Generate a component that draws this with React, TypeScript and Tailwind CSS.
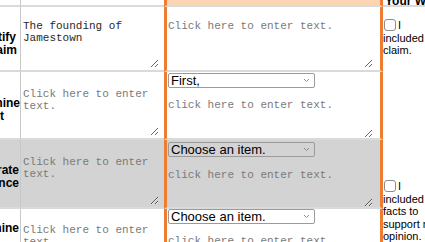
const sans = "font-['Liberation_Sans',Arial,sans-serif]";
const mono = "font-['Liberation_Mono','Courier_New',monospace]";

const line = "border-b-2 border-b-[#dadada]";
const orange = "border-x-[3px] border-x-[#ef7d31]";

function Select({ label }: { label: string }) {
  return (
    <div
      className={`ml-[1px] flex h-[15px] w-[147px] items-center justify-between rounded-[2px] border border-[#9a9a9a] pl-[2px] pr-[4px] text-[13px] leading-none text-black ${sans}`}
    >
      <span>{label}</span>
      <svg width="7" height="5" viewBox="0 0 7 5" fill="none">
        <path d="M1 1l2.5 2.5L6 1" stroke="#8a8a8a" strokeWidth="1" />
      </svg>
    </div>
  );
}

function Area({ text, dark, className }: { text: string; dark?: boolean; className: string }) {
  return (
    <textarea
      readOnly
      defaultValue={text}
      className={`block bg-transparent px-[1px] text-[11px] leading-[12px] outline-none ${mono} ${
        dark ? "text-[#2a2a2a]" : "text-[#7a7a7a]"
      } ${className}`}
    />
  );
}

function Label({ lines }: { lines: { t: string; mr: string }[] }) {
  return (
    <>
      {lines.map((l) => (
        <div key={l.t} className={`whitespace-nowrap ${l.mr}`}>
          {l.t}
        </div>
      ))}
    </>
  );
}

function Check({ lines }: { lines: string[] }) {
  return (
    <>
      <div className="flex items-center">
        <span className="ml-[1px] inline-block h-[12px] w-[12px] rounded-[3px] border border-[#8c8c8c] bg-white" />
        <span className="ml-[2px]">I</span>
      </div>
      {lines.map((l) => (
        <div key={l} className="whitespace-nowrap">
          {l}
        </div>
      ))}
    </>
  );
}

export default function App() {
  const col1 = `flex flex-col items-end overflow-hidden border-r border-r-[#c8c8c8] text-[12px] font-bold leading-[13px] text-black ${sans} ${line}`;
  return (
    <div className="h-[242px] w-[425px] overflow-hidden bg-white">
      <div className="grid grid-cols-[21px_143px_219px_300px] grid-rows-[7px_65px_68px_69px_80px]">
        {/* header */}
        <div className={`border-r border-r-[#c8c8c8] ${line}`} />
        <div className={line} />
        <div className={`bg-[#fbd4b4] ${orange} ${line}`} />
        <div className={`overflow-hidden ${line}`}>
          <div className={`ml-[2px] mt-[-5px] text-[12px] font-bold leading-[12px] text-black ${sans}`}>
            Your Writing
          </div>
        </div>

        {/* row 1 */}
        <div className={`${col1} pt-[24px]`}>
          <Label lines={[{ t: "Identify", mr: "mr-[4px]" }, { t: "Claim", mr: "mr-[3px]" }]} />
        </div>
        <div className={`py-[2px] ${line}`}>
          <Area text={"The founding of Jamestown"} dark className="ml-[1px] h-[59px] w-[137px] pt-[11px]" />
        </div>
        <div className={`py-[2px] ${orange} ${line}`}>
          <Area text="Click here to enter text." className="h-[59px] w-[206px] pt-[11px]" />
        </div>
        <div className={`row-span-2 pt-[12px] text-[11px] leading-[12.6px] text-black ${sans}`}>
          <Check lines={["included", "claim."]} />
        </div>

        {/* row 2 */}
        <div className={`${col1} pt-[25px]`}>
          <Label lines={[{ t: "Determine", mr: "mr-0" }, { t: "Text", mr: "mr-[16px]" }]} />
        </div>
        <div className={`py-[2px] ${line}`}>
          <Area text="Click here to enter text." className="ml-[1px] h-[62px] w-[137px] pt-[14px]" />
        </div>
        <div className={`pt-[1px] ${orange} ${line}`}>
          <Select label="First," />
          <Area text="click here to enter text." className="mt-[1px] h-[49px] w-[206px] pt-[10px]" />
        </div>

        {/* row 3 */}
        <div className={`${col1} bg-[#d3d3d3] pt-[24px]`}>
          <Label lines={[{ t: "Elaborate", mr: "mr-[1px]" }, { t: "Evidence", mr: "mr-[1px]" }]} />
        </div>
        <div className={`bg-[#d3d3d3] py-[2px] ${line}`}>
          <Area text="Click here to enter text." className="ml-[1px] h-[63px] w-[137px] pt-[14px]" />
        </div>
        <div className={`bg-[#d3d3d3] pt-[2px] ${orange} ${line}`}>
          <Select label="Choose an item." />
          <Area text="click here to enter text." className="mt-[1px] h-[49px] w-[206px] pt-[11px]" />
        </div>
        <div className={`row-span-2 pt-[40px] text-[11px] leading-[12.6px] text-black ${sans}`}>
          <Check lines={["included", "facts to", "support my", "opinion."]} />
        </div>

        {/* row 4 */}
        <div className={`${col1} pt-[13px]`}>
          <Label lines={[{ t: "Determine", mr: "mr-[1px]" }]} />
        </div>
        <div className={`py-[2px] ${line}`}>
          <Area text="Click here to enter text." className="ml-[1px] h-[62px] w-[137px] pt-[13px]" />
        </div>
        <div className={`${orange} ${line}`}>
          <Select label="Choose an item." />
          <Area text="click here to enter text." className="mt-[1px] h-[49px] w-[206px] pt-[10px]" />
        </div>
      </div>
    </div>
  );
}
